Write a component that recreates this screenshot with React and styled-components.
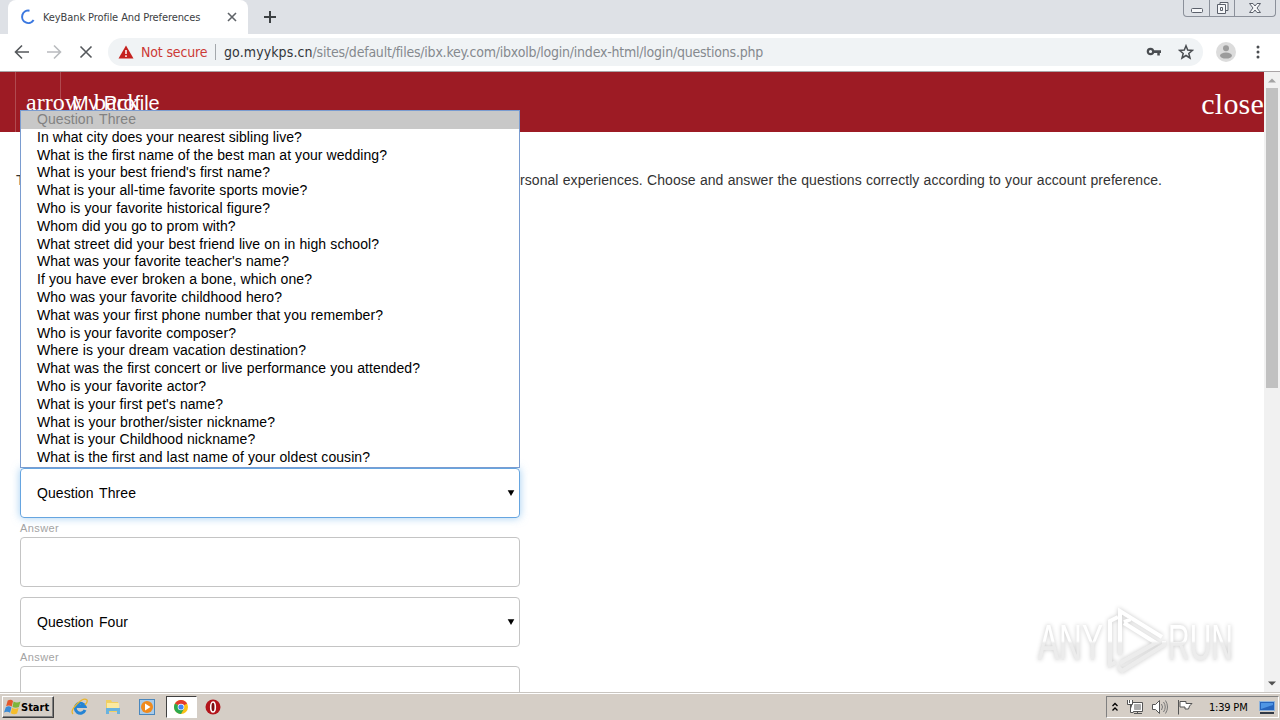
import React from "react";
import styled, { createGlobalStyle } from "styled-components";

const questions = [
  ["In what city does your nearest sibling live?", 264],
  ["What is the first name of the best man at your wedding?", 350],
  ["What is your best friend's first name?", 233],
  ["What is your all-time favorite sports movie?", 270],
  ["Who is your favorite historical figure?", 233],
  ["Whom did you go to prom with?", 197],
  ["What street did your best friend live on in high school?", 342],
  ["What was your favorite teacher's name?", 252],
  ["If you have ever broken a bone, which one?", 275],
  ["Who was your favorite childhood hero?", 245],
  ["What was your first phone number that you remember?", 346],
  ["Who is your favorite composer?", 199],
  ["Where is your dream vacation destination?", 269],
  ["What was the first concert or live performance you attended?", 383],
  ["Who is your favorite actor?", 169],
  ["What is your first pet's name?", 186],
  ["What is your brother/sister nickname?", 238],
  ["What is your Childhood nickname?", 218],
  ["What is the first and last name of your oldest cousin?", 333]
];

const TabStrip = () => (
  <Strip>
    <Tab>
      <Spinner viewBox="0 0 16 16">
        <path d="M9.5 1.7A6.2 6.2 0 1 0 13.6 11" />
      </Spinner>
      <TabTitle>KeyBank Profile And Preferences</TabTitle>
      <TabClose viewBox="0 0 10 10">
        <path d="M1 1l8 8M9 1L1 9" />
      </TabClose>
    </Tab>
    <NewTab viewBox="0 0 12 12">
      <path d="M6 0v12M0 6h12" />
    </NewTab>
    <WindowButtons>
      <WindowButton $width={25}>
        <svg width="14" height="16">
          <rect x="1.5" y="8.5" width="11" height="4" rx="1" />
        </svg>
      </WindowButton>
      <WindowButton $width={25}>
        <svg width="14" height="16">
          <path d="M5 4V2.5h8v8h-2" />
          <path d="M2.5 4.5h8v9h-8zM5.5 7.5h2v3h-2z" />
        </svg>
      </WindowButton>
      <WindowButton $width={41}>
        <svg width="14" height="16">
          <path d="M1.5 3.5H5l2 2.500 2-2.500h3.500L9 8l3.500 4.500H9L7 10l-2 2.500H1.500L5 8z" />
        </svg>
      </WindowButton>
    </WindowButtons>
  </Strip>
);

const Toolbar = () => (
  <Bar>
    <NavIcon viewBox="0 0 16 16">
      <path d="M15 8H2M8 1.500L1.500 8 8 14.500" />
    </NavIcon>
    <NavIcon viewBox="0 0 16 16" $color="#b9bbbe">
      <path d="M1 8h13M8 1.500L14.500 8 8 14.500" />
    </NavIcon>
    <NavIcon viewBox="0 0 16 16">
      <path d="M2.500 2.500l11 11M13.500 2.500l-11 11" />
    </NavIcon>
    <AddressBar>
      <svg width="16" height="14" viewBox="0 0 16 14">
        <path d="M8 0.500L15.500 13.500H0.500z" fill="#c5221f" />
        <path d="M8 5v4M8 10.300v1.700" stroke="#fff" strokeWidth="1.500" />
      </svg>
      <NotSecure>Not secure</NotSecure>
      <AddressDivider />
      <Host>go.myykps.cn</Host>
      <Path>/sites/default/files/ibx.key.com/ibxolb/login/index-html/login/questions.php</Path>
      <AddressIcons>
        <svg width="16" height="16" viewBox="0 0 16 16">
          <circle cx="4.500" cy="7.500" r="2.700" fill="none" stroke="#4a4d51" strokeWidth="2.200" />
          <path d="M7.500 6.300H15v2.800h-1.200v2.300h-2.500V9.100H7.500z" fill="#4a4d51" />
        </svg>
        <svg width="16" height="16" viewBox="0 0 16 16">
          <path
            d="M8 1.800l1.700 4.300 4.700.3-3.600 3 1.200 4.600L8 11.500 4 14l1.200-4.600-3.600-3 4.700-.3z"
            fill="none"
            stroke="#4a4d51"
            strokeWidth="1.500"
          />
        </svg>
      </AddressIcons>
    </AddressBar>
    <svg width="20" height="20" viewBox="0 0 20 20">
      <circle cx="10" cy="10" r="10" fill="#dcdcdc" />
      <circle cx="10" cy="6.300" r="3" fill="#9c9c9c" />
      <ellipse cx="10" cy="13.600" rx="6" ry="3" fill="#9c9c9c" />
    </svg>
    <MenuDots viewBox="0 0 4 14">
      <circle cx="2" cy="2" r="1.500" />
      <circle cx="2" cy="7" r="1.500" />
      <circle cx="2" cy="12" r="1.500" />
    </MenuDots>
  </Bar>
);

const Scrollbar = () => (
  <Track>
    <svg width="16" height="16">
      <path d="M4 10.500h8L8 6.500z" fill="#a3a3a3" />
    </svg>
    <Thumb />
    <TrackEnd width="16" height="16">
      <path d="M4 5.500h8L8 9.500z" fill="#505050" />
    </TrackEnd>
  </Track>
);

const Select = ({ label, open, width }) => (
  <Field $open={open}>
    <Line $width={width}>{label}</Line>
    <svg width="8" height="8">
      <path d="M0.700 1.300h6.600L4 7z" fill="#000" />
    </svg>
    {open && (
      <Options>
        <Option $selected>
          <Line $width={99}>Question Three</Line>
        </Option>
        {questions.map(([text, w]) => (
          <Option key={text}>
            <Line $width={w}>{text}</Line>
          </Option>
        ))}
      </Options>
    )}
  </Field>
);

const Watermark = () => (
  <WatermarkBox viewBox="0 0 228 76">
    <defs>
      <linearGradient id="fade" x1="0" y1="10" x2="0" y2="62" gradientUnits="userSpaceOnUse">
        <stop offset="0.5" stopColor="#fff" />
        <stop offset="0.54" stopColor="#ececec" />
      </linearGradient>
    </defs>
    <g fill="url(#fade)">
      <text x="4" y="55" textLength="65" lengthAdjust="spacingAndGlyphs">ANY</text>
      <text x="134" y="55" textLength="65" lengthAdjust="spacingAndGlyphs">RUN</text>
    </g>
    <g fill="none" stroke="url(#fade)" strokeWidth="4">
      <path d="M84 12l-8 4v44l6-3" />
      <path d="M86 50V6l42 26" />
      <path d="M95 14v1l-5 2M90 18l32 20-36 20" />
      <path d="M84 62l4 4 42-26v-4" />
    </g>
  </WatermarkBox>
);

const Taskbar = () => (
  <TaskbarRow>
    <Start>
      <svg width="17" height="17" viewBox="0 0 16 16">
        <path d="M3.500 1.500q3-1.500 5 .3L7.300 7Q4.500 5.300 2 6.800z" fill="#e4572a" />
        <path d="M9 2.300q3 2 6.500 0L14 7.500q-3 1.500-6 0z" fill="#7db53a" />
        <path d="M1.700 7.700q3-1.700 5.300.2L5.700 13Q3 11.200 0 12.800z" fill="#3b8bd6" />
        <path d="M7.600 8.300q3 1.800 6.200 0L12.300 13.700q-3 1.500-6-.3z" fill="#f5bd2c" />
      </svg>
      <StartText>Start</StartText>
    </Start>
    <Launch>
      <svg width="18" height="18" viewBox="0 0 18 18">
        <path
          d="M14 12A5 5 0 1 1 14 8.500H6"
          fill="none"
          stroke="#2584d4"
          strokeWidth="3"
        />
        <path d="M2 16Q-1 13 6 6T16 2q1 2-2 5" fill="none" stroke="#e9b52c" strokeWidth="1.300" />
      </svg>
    </Launch>
    <Launch>
      <svg width="18" height="18" viewBox="0 0 18 18">
        <path d="M2 2h5l1 2h6v10H2z" fill="#f0cf62" />
        <path d="M3 5h12v5H3z" fill="#fbe9a0" />
        <path d="M2 16v-6h14v6h-3v-3H5v3z" fill="#69b3df" />
      </svg>
    </Launch>
    <Launch>
      <svg width="18" height="18" viewBox="0 0 18 18">
        <rect x="1.500" y="1.500" width="15" height="15" fill="#a9cbe9" stroke="#4a87bd" />
        <circle cx="9" cy="9" r="6" fill="#f08a1d" />
        <path d="M7 5.500l5.500 3.500L7 12.500z" fill="#fff" />
      </svg>
    </Launch>
    <Launch $active>
      <svg width="14" height="14" viewBox="0 0 14 14">
        <circle cx="7" cy="7" r="7" fill="#fbc116" />
        <path d="M7 7L.94 3.500A7 7 0 0 1 13.060 3.500z" fill="#e33b2e" />
        <path d="M7 7L.94 3.500A7 7 0 0 0 7 14l3-5.200z" fill="#2da94f" />
        <circle cx="7" cy="7" r="3.300" fill="#fff" />
        <circle cx="7" cy="7" r="2.600" fill="#4285f4" />
      </svg>
    </Launch>
    <Launch>
      <svg width="16" height="16" viewBox="0 0 16 16">
        <circle cx="8" cy="8" r="7.500" fill="#b3141b" />
        <ellipse cx="8" cy="8" rx="2.300" ry="5" fill="#7c0d12" stroke="#fff" strokeWidth="1.600" />
      </svg>
    </Launch>
    <Tray>
      <svg width="8" height="12">
        <path d="M1.500 5L4 2.500 6.500 5M1.500 9.500L4 7l2.500 2.500" fill="none" stroke="#000" strokeWidth="1.300" />
      </svg>
      <svg width="18" height="18" viewBox="0 0 18 18" fill="#fff" stroke="#555">
        <path d="M5.500 4.500h11v9h-11zM8 15.500h8M11.500 13v2" />
        <path d="M8.500 6.500h6v5h-6z" fill="#aaa" stroke="#aaa" />
        <path d="M1.500 2v4.500h5V2M3.500 2v3M4.500 6.500v8h3" />
      </svg>
      <svg width="18" height="18" viewBox="0 0 18 18" fill="#fff" stroke="#555">
        <path d="M1.500 6.500h3l4-4v13l-4-4h-3z" />
        <path d="M10.500 6q2 3 0 6M12.500 4q3.500 5 0 10M14.500 2.500q4 6.500 0 13" fill="none" stroke="#777" />
      </svg>
      <svg width="18" height="18" viewBox="0 0 18 18" fill="#fff" stroke="#555">
        <path d="M2.500 2v14.500M4 3.500h6v2h6l-2.500 2.500-1 3H9v-2H4z" />
      </svg>
      <Clock>1:39 PM</Clock>
      <svg width="16" height="14" viewBox="0 0 16 14">
        <path d="M0.500 1.500h15v9H.5z" fill="#2764bc" stroke="#8fb4dd" />
        <path d="M2 3h12v2L2 9z" fill="#4f95e4" />
        <path d="M1 12h14v2H1z" fill="#303844" />
      </svg>
    </Tray>
  </TaskbarRow>
);

const App = () => (
  <Desktop>
    <GlobalStyle />
    <TabStrip />
    <Toolbar />
    <Viewport>
      <Page>
        <Header>
          <BackSlot>
            <IconText>arrow_back</IconText>
          </BackSlot>
          <Title>My Profile</Title>
          <CloseText>close</CloseText>
        </Header>
        <Intro>
          <IntroStart>T</IntroStart>
          <Line $width={642}>
            rsonal experiences. Choose and answer the questions correctly according to your account
            preference.
          </Line>
        </Intro>
        <Form>
          <Select label="Question Three" width={99} open />
          <Label>Answer</Label>
          <Answer />
          <Select label="Question Four" width={91} />
          <Label>Answer</Label>
          <Answer />
        </Form>
        <Watermark />
      </Page>
      <Scrollbar />
    </Viewport>
    <Taskbar />
  </Desktop>
);

export default App;

const GlobalStyle = createGlobalStyle`
  * {
    box-sizing: border-box;
  }
  body {
    margin: 0;
    overflow: hidden;
  }
  svg {
    display: block;
    flex: none;
  }
`;

const Desktop = styled.div`
  width: 1280px;
  height: 720px;
  display: flex;
  flex-direction: column;
  overflow: hidden;
  background: #fff;
  font-family: "Liberation Sans", Arial, sans-serif;
`;

const Strip = styled.div`
  height: 34px;
  flex: none;
  display: flex;
  align-items: flex-start;
  padding-left: 8px;
  background: #dee1e6;
`;

const Tab = styled.div`
  width: 240px;
  height: 34px;
  display: flex;
  align-items: center;
  padding: 0 11px 0 12px;
  border-radius: 8px 8px 0 0;
  background: #fff;
`;

const Spinner = styled.svg`
  width: 16px;
  height: 16px;
  fill: none;
  stroke: #3b78e0;
  stroke-width: 2;
`;

const TabTitle = styled.span`
  flex: 1;
  margin-left: 7px;
  color: #3c4043;
  font: 11px "DejaVu Sans Condensed", Tahoma, sans-serif;
  letter-spacing: -0.1px;
  white-space: nowrap;
`;

const TabClose = styled.svg`
  width: 10px;
  height: 10px;
  stroke: #5f6368;
  stroke-width: 1.6;
`;

const NewTab = styled.svg`
  width: 12px;
  height: 12px;
  margin: 11px 0 0 16px;
  stroke: #3c4043;
  stroke-width: 2;
`;

const WindowButtons = styled.div`
  display: flex;
  height: 17px;
  margin: 0 4px 0 auto;
  border: 1px solid #8b909a;
  border-top: 0;
  border-radius: 0 0 4px 4px;
`;

const WindowButton = styled.div`
  width: ${props => props.$width}px;
  display: flex;
  justify-content: center;
  & + & {
    border-left: 1px solid #8b909a;
  }
  svg {
    fill: #f6f7f9;
    stroke: #5b606b;
  }
`;

const Bar = styled.div`
  height: 38px;
  flex: none;
  display: flex;
  align-items: center;
  padding: 0 19px 2px 14px;
  border-bottom: 1px solid #a9a4a6;
  background: #fff;
`;

const NavIcon = styled.svg`
  width: 16px;
  height: 16px;
  margin-right: 16px;
  fill: none;
  stroke: ${props => props.$color || "#55585c"};
  stroke-width: 1.6;
`;

const AddressBar = styled.div`
  width: 1095px;
  height: 28px;
  display: flex;
  align-items: center;
  margin: 0 13px 0 -2px;
  padding: 0 9px 0 10px;
  border-radius: 14px;
  background: #f0f3f5;
  color: #85898e;
  font: 14px "DejaVu Sans Condensed", Tahoma, sans-serif;
  white-space: nowrap;
`;

const NotSecure = styled.span`
  width: 67px;
  margin-left: 7px;
  color: #cc3a36;
  letter-spacing: -0.15px;
`;

const AddressDivider = styled.i`
  width: 1px;
  height: 16px;
  margin: 0 8px 0 7px;
  background: #a4a8ac;
`;

const Host = styled.span`
  color: #33363a;
  letter-spacing: 0.1px;
`;

const Path = styled.span`
  letter-spacing: -0.22px;
`;

const AddressIcons = styled.div`
  display: flex;
  gap: 16px;
  margin-left: auto;
`;

const MenuDots = styled.svg`
  width: 4px;
  height: 14px;
  margin-left: 20px;
  fill: #4a4d51;
`;

const Viewport = styled.div`
  height: 620px;
  flex: none;
  display: flex;
`;

const Page = styled.div`
  position: relative;
  width: 1264px;
  overflow: hidden;
  background: #fff;
`;

const Header = styled.div`
  height: 60px;
  display: flex;
  padding-left: 15px;
  background: #9d1b24;
  color: #fff;
  white-space: nowrap;
`;

const BackSlot = styled.div`
  width: 46px;
  padding: 16px 0 0 10px;
  border: solid #b04a50;
  border-width: 0 1px;
`;

const IconText = styled.div`
  font: 24px/28px "Liberation Serif", "Times New Roman", serif;
`;

const Title = styled.div`
  margin-left: 11px;
  padding-top: 19px;
  font-size: 20px;
  line-height: 24px;
  letter-spacing: -0.15px;
`;

const CloseText = styled.div`
  margin-left: auto;
  padding-top: 14px;
  font: 30px/36px "Liberation Serif", "Times New Roman", serif;
  letter-spacing: 0.2px;
`;

const Intro = styled.div`
  display: flex;
  padding: 38px 0 0 16px;
  color: #333;
  font-size: 14px;
  line-height: 20px;
  white-space: nowrap;
`;

const IntroStart = styled.span`
  width: 504px;
`;

// text-align-last spreads the words over the given width
const Line = styled.span`
  display: block;
  width: ${props => props.$width}px;
  letter-spacing: 0.06px;
  text-align: justify;
  text-align-last: justify;
  white-space: nowrap;
`;

const Form = styled.div`
  width: 500px;
  margin: 278px 0 0 20px;
`;

const Field = styled.div`
  position: relative;
  height: 50px;
  display: flex;
  align-items: center;
  justify-content: space-between;
  padding: 0 4px 0 16px;
  border: 1px solid ${props => (props.$open ? "#66a5e0" : "#c4c4c4")};
  border-radius: 4px;
  box-shadow: ${props => (props.$open ? "0 0 8px rgba(102, 175, 233, 0.6)" : "none")};
  color: #000;
  font-size: 14px;
`;

const Options = styled.div`
  position: absolute;
  left: -1px;
  bottom: 49px;
  width: 500px;
  height: 358px;
  border: 1px solid #7a9cd0;
  background: #fff;
`;

const Option = styled.div`
  height: 17.8px;
  padding-left: 16px;
  background: ${props => (props.$selected ? "#c8c8c8" : "#fff")};
  color: ${props => (props.$selected ? "#828282" : "#000")};
  line-height: 17px;
`;

const Label = styled.div`
  height: 19px;
  padding-top: 3px;
  color: #a3a3a3;
  font-size: 11px;
  line-height: 14px;
  letter-spacing: 0.4px;
`;

const Answer = styled.div`
  height: 50px;
  margin-bottom: 10px;
  border: 1px solid #c4c4c4;
  border-radius: 4px;
`;

const WatermarkBox = styled.svg`
  position: absolute;
  left: 1034px;
  top: 533px;
  width: 228px;
  height: 76px;
  filter: drop-shadow(0 0 2px rgba(0, 0, 0, 0.22));
  font: 50px "Liberation Sans Narrow", "Liberation Sans", sans-serif;
`;

const Track = styled.div`
  width: 16px;
  display: flex;
  flex-direction: column;
  background: #f1f1f1;
`;

const Thumb = styled.div`
  width: 12px;
  height: 300px;
  margin-left: 2px;
  background: #c1c1c1;
`;

const TrackEnd = styled.svg`
  margin-top: auto;
`;

const TaskbarRow = styled.div`
  height: 28px;
  display: flex;
  align-items: center;
  padding: 1px 1px 0 2px;
  border-top: 1px solid #c9c5c0;
  background: #d5cec6;
  box-shadow: inset 0 1px #fff;
`;

const Start = styled.div`
  width: 52px;
  height: 22px;
  display: flex;
  align-items: center;
  margin-right: 9px;
  padding-left: 1px;
  border: 1px solid;
  border-color: #fff #404040 #404040 #fff;
  box-shadow: inset -1px -1px #808080;
`;

const StartText = styled.span`
  font: bold 11px "DejaVu Sans Condensed", Tahoma, sans-serif;
`;

const Launch = styled.div`
  width: ${props => (props.$active ? 31 : 33.5)}px;
  height: 22px;
  display: flex;
  align-items: center;
  justify-content: center;
  margin-left: ${props => (props.$active ? 2 : 0)}px;
  border: ${props => (props.$active ? "1px solid" : "0")};
  border-color: #404040 #fff #fff #404040;
  background: ${props => (props.$active ? "#fff" : "none")};
`;

const Tray = styled.div`
  width: 173px;
  height: 22px;
  display: flex;
  align-items: center;
  margin-left: auto;
  padding-left: 4px;
  border: 1px solid;
  border-color: #808080 #fff #fff #808080;
  svg + svg {
    margin-left: 7px;
  }
`;

const Clock = styled.span`
  width: 40px;
  margin: 0 10px 0 15px;
  font: 11px "DejaVu Sans Condensed", Tahoma, sans-serif;
  letter-spacing: -0.2px;
  white-space: nowrap;
`;
